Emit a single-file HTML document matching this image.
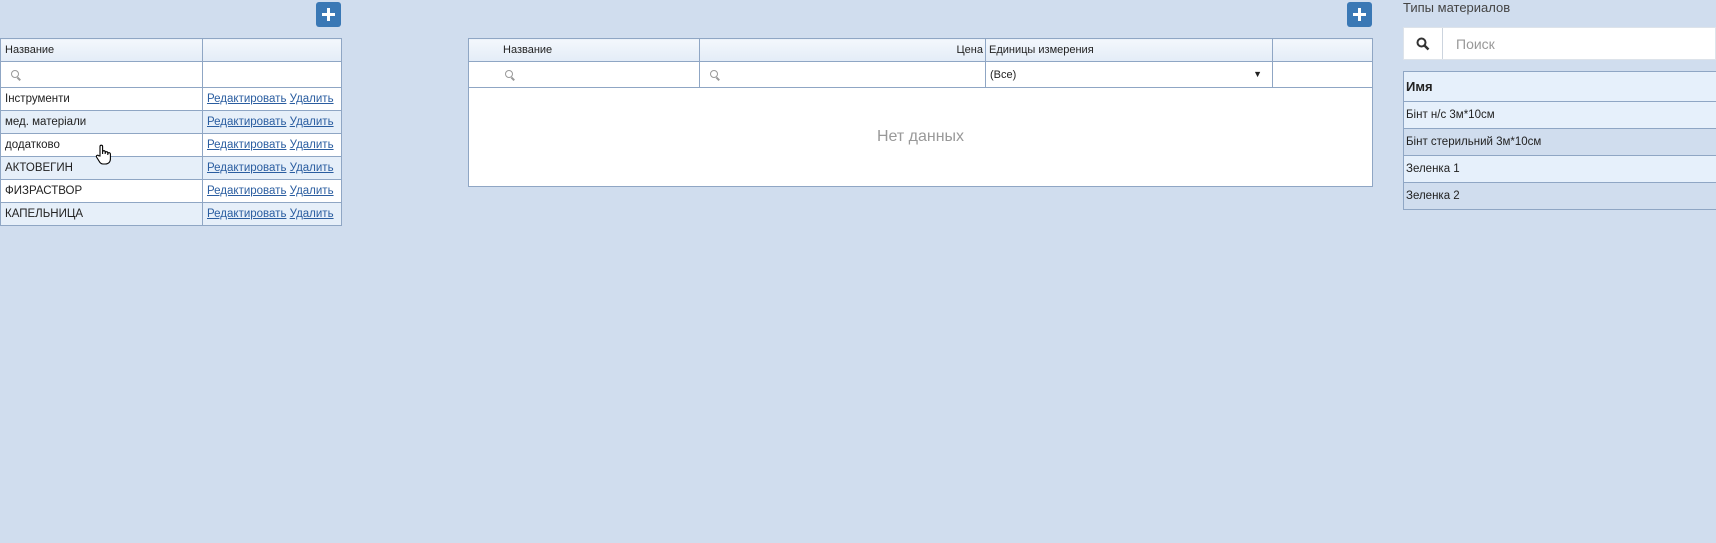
<!DOCTYPE html>
<html><head><meta charset="utf-8"><style>
*{box-sizing:border-box;margin:0;padding:0}
body{width:1716px;height:543px;background:#d0ddee;font-family:"Liberation Sans",sans-serif;font-size:11.5px;color:#222;position:relative;overflow:hidden}
.abs{position:absolute}
.plus{width:25px;height:25px;background:#3a78b5;border-radius:3px}
.plus:before{content:"";position:absolute;left:6px;top:11px;width:13px;height:3px;background:#fff}
.plus:after{content:"";position:absolute;left:11px;top:6px;width:3px;height:13px;background:#fff}
table{border-collapse:collapse;position:absolute;table-layout:fixed}
td{border:1px solid #8fa6c4;padding:0 4px;height:23px;white-space:nowrap;overflow:hidden}
.hd td{background:linear-gradient(#f3f7fc,#e3ecf7);height:23px;font-size:11px}
.flt td{background:#fff;height:26px}
.alt td{background:#e6eff9}
.w td{background:#fff}
a{color:#2a5da0;text-decoration:underline}
.mag{display:inline-block;width:8px;height:8px;border:1.5px solid #999;border-radius:50%;position:relative;margin-left:6px}
.mag:after{content:"";position:absolute;width:4px;height:1.5px;background:#999;left:5px;top:7px;transform:rotate(45deg)}
</style></head><body>
<div class="abs plus" style="left:316px;top:2px"></div>
<table style="left:0;top:38px;width:341px">
<col style="width:202px"><col style="width:139px">
<tr class="hd"><td>Название</td><td></td></tr>
<tr class="flt"><td><span class="mag"></span></td><td></td></tr>
<tr class="w"><td>Інструменти</td><td><a>Редактировать</a> <a>Удалить</a></td></tr>
<tr class="alt"><td>мед. матеріали</td><td><a>Редактировать</a> <a>Удалить</a></td></tr>
<tr class="w"><td>додатково</td><td><a>Редактировать</a> <a>Удалить</a></td></tr>
<tr class="alt"><td>АКТОВЕГИН</td><td><a>Редактировать</a> <a>Удалить</a></td></tr>
<tr class="w"><td>ФИЗРАСТВОР</td><td><a>Редактировать</a> <a>Удалить</a></td></tr>
<tr class="alt"><td>КАПЕЛЬНИЦА</td><td><a>Редактировать</a> <a>Удалить</a></td></tr>
</table>
<svg class="abs" style="left:95px;top:144px" width="18" height="22" viewBox="0 0 18 22"><path d="M5 12V2.5a1.3 1.3 0 0 1 2.6 0V10V8a1.3 1.3 0 0 1 2.6 0v2V9a1.3 1.3 0 0 1 2.6 0v2v-1a1.3 1.3 0 0 1 2.6 0v5c0 3-2 5-5 5H8c-2 0-3-1-4-3L1.5 13a1.2 1.2 0 0 1 2-1.3z" fill="#fff" stroke="#000" stroke-width="1.1"/></svg>

<div class="abs plus" style="left:1347px;top:2px"></div>
<table style="left:468px;top:38px;width:904px">
<col style="width:231px"><col style="width:286px"><col style="width:287px"><col style="width:100px">
<tr class="hd"><td style="padding-left:34px">Название</td><td style="text-align:right;padding-right:2px">Цена</td><td style="padding-left:3px">Единицы измерения</td><td></td></tr>
<tr class="flt"><td style="padding-left:30px"><span class="mag"></span></td><td><span class="mag"></span></td><td style="font-size:11px">(Все)<span style="float:right;font-size:9px;margin-right:6px">▼</span></td><td></td></tr>
<tr class="w"><td colspan="4" style="height:99px;text-align:center;color:#999;font-size:16px">Нет данных</td></tr>
</table>

<div class="abs" style="left:1403px;top:0;color:#444;font-size:13px">Типы материалов</div>
<div class="abs" style="left:1403px;top:27px;width:313px;height:33px;background:#fff;border:1px solid #dde3ea">
<div class="abs" style="left:0;top:0;width:39px;height:31px;border-right:1px solid #ccd4de"><svg class="abs" style="left:12px;top:9px" width="14" height="14" viewBox="0 0 14 14"><circle cx="5.5" cy="5.5" r="4" fill="none" stroke="#333" stroke-width="2"/><path d="M8.5 8.5L12.5 12.5" stroke="#333" stroke-width="2.5"/></svg></div>
<div class="abs" style="left:52px;top:8px;color:#999;font-size:14px">Поиск</div></div>
<table style="left:1403px;top:71px;width:320px">
<tr><td style="height:30px;background:#e6f0fb;font-weight:bold;font-size:13px;padding-left:2px">Имя</td></tr>
<tr><td style="height:27px;background:#e6f0fb;font-size:11.5px;padding-left:2px">Бінт н/с 3м*10см</td></tr>
<tr><td style="height:27px;background:#d0ddee;font-size:11.5px;padding-left:2px">Бінт стерильний 3м*10см</td></tr>
<tr><td style="height:27px;background:#e6f0fb;font-size:11.5px;padding-left:2px">Зеленка 1</td></tr>
<tr><td style="height:27px;background:#d0ddee;font-size:11.5px;padding-left:2px">Зеленка 2</td></tr>
</table>
</body></html>
